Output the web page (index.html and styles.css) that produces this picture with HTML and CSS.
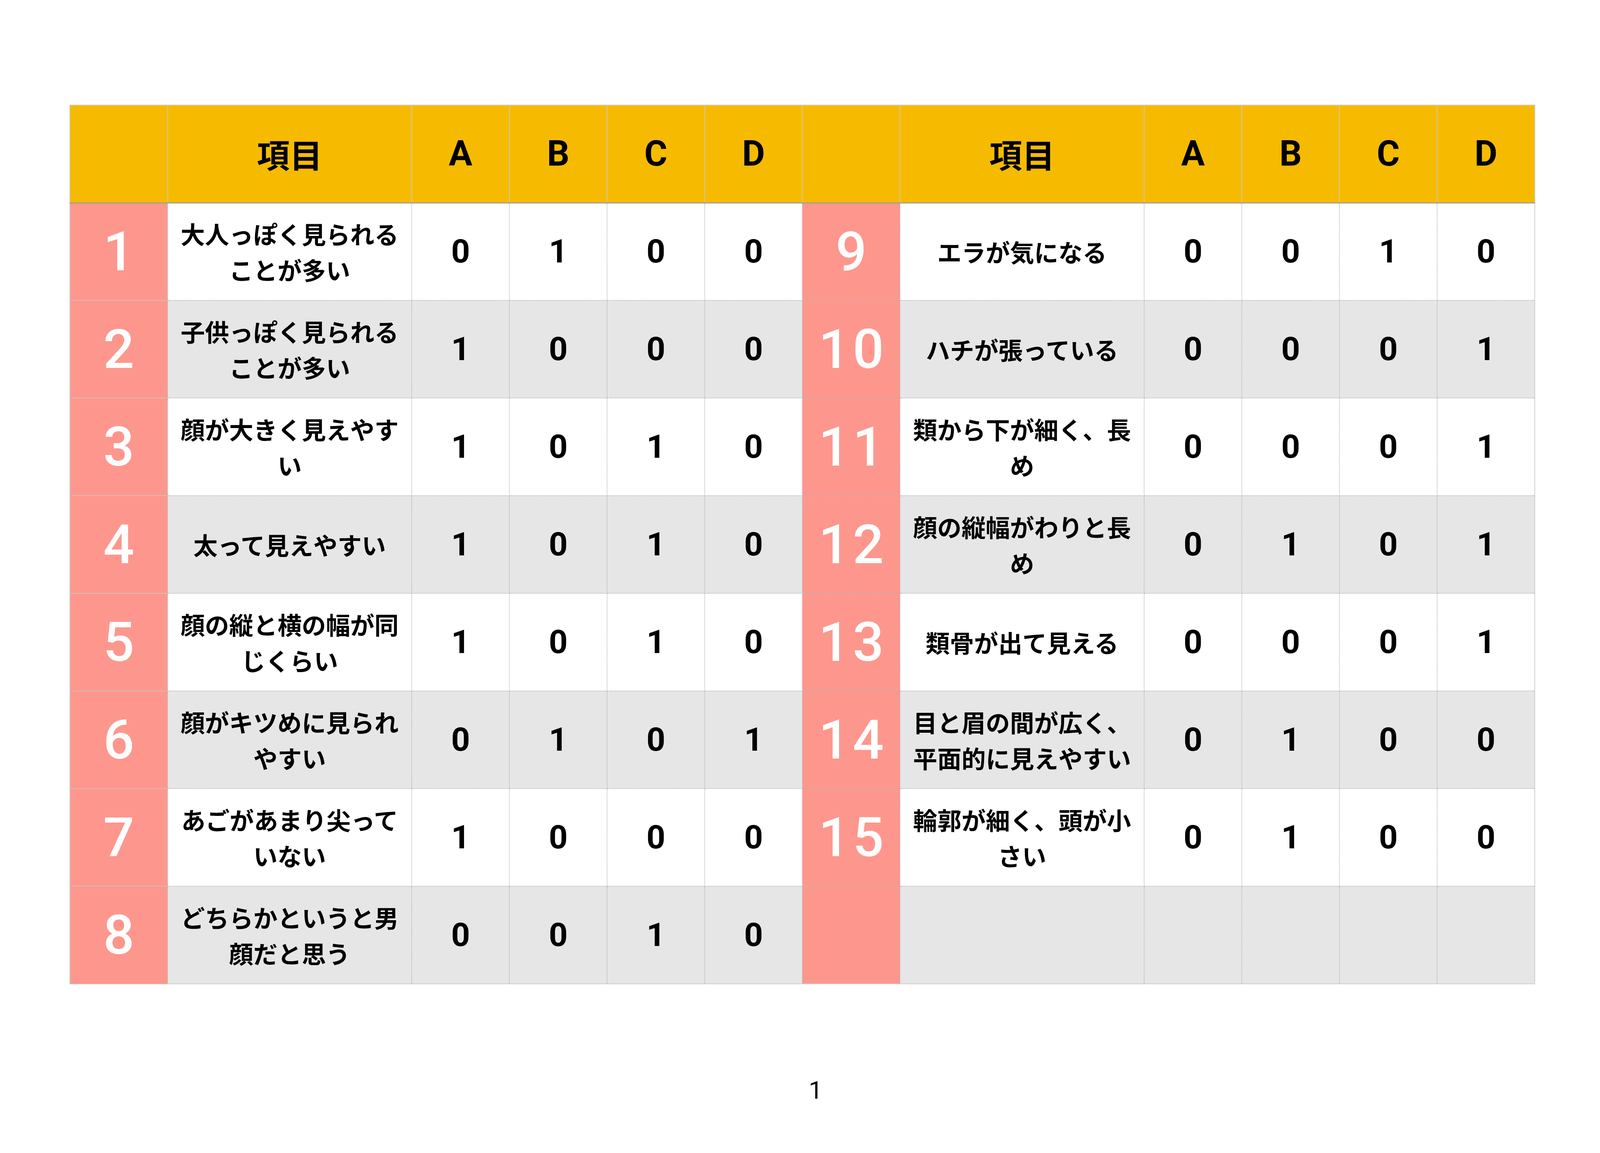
FILE: index.html
```html
<!DOCTYPE html>
<html lang="ja">
<head>
<meta charset="utf-8">
<title>診断表</title>
<link rel="stylesheet" href="styles.css">
</head>
<body>
<div class="page">
  <table class="sheet">
    <colgroup>
      <col class="c-num"><col class="c-item"><col class="c-val"><col class="c-val"><col class="c-val"><col class="c-val">
      <col class="c-num"><col class="c-item"><col class="c-val"><col class="c-val"><col class="c-val"><col class="c-val">
    </colgroup>
    <thead>
      <tr>
        <th></th><th class="jp">項目</th><th>A</th><th>B</th><th>C</th><th>D</th>
        <th></th><th class="jp">項目</th><th>A</th><th>B</th><th>C</th><th>D</th>
      </tr>
    </thead>
    <tbody>
      <tr class="odd">
        <td class="num left">1</td><td class="item">大人っぽく見られることが多い</td><td>0</td><td>1</td><td>0</td><td>0</td>
        <td class="num">9</td><td class="item">エラが気になる</td><td>0</td><td>0</td><td>1</td><td>0</td>
      </tr>
      <tr class="even">
        <td class="num left">2</td><td class="item">子供っぽく見られることが多い</td><td>1</td><td>0</td><td>0</td><td>0</td>
        <td class="num">10</td><td class="item">ハチが張っている</td><td>0</td><td>0</td><td>0</td><td>1</td>
      </tr>
      <tr class="odd">
        <td class="num left">3</td><td class="item">顔が大きく見えやすい</td><td>1</td><td>0</td><td>1</td><td>0</td>
        <td class="num">11</td><td class="item">類から下が細く、長め</td><td>0</td><td>0</td><td>0</td><td>1</td>
      </tr>
      <tr class="even">
        <td class="num left">4</td><td class="item">太って見えやすい</td><td>1</td><td>0</td><td>1</td><td>0</td>
        <td class="num">12</td><td class="item">顔の縦幅がわりと長め</td><td>0</td><td>1</td><td>0</td><td>1</td>
      </tr>
      <tr class="odd">
        <td class="num left">5</td><td class="item">顔の縦と横の幅が同じくらい</td><td>1</td><td>0</td><td>1</td><td>0</td>
        <td class="num">13</td><td class="item">類骨が出て見える</td><td>0</td><td>0</td><td>0</td><td>1</td>
      </tr>
      <tr class="even">
        <td class="num left">6</td><td class="item">顔がキツめに見られやすい</td><td>0</td><td>1</td><td>0</td><td>1</td>
        <td class="num">14</td><td class="item">目と眉の間が広く、平面的に見えやすい</td><td>0</td><td>1</td><td>0</td><td>0</td>
      </tr>
      <tr class="odd">
        <td class="num left">7</td><td class="item">あごがあまり尖っていない</td><td>1</td><td>0</td><td>0</td><td>0</td>
        <td class="num">15</td><td class="item">輪郭が細く、頭が小さい</td><td>0</td><td>1</td><td>0</td><td>0</td>
      </tr>
      <tr class="even last">
        <td class="num left">8</td><td class="item">どちらかというと男顔だと思う</td><td>0</td><td>0</td><td>1</td><td>0</td>
        <td class="num"></td><td class="item"></td><td></td><td></td><td></td><td></td>
      </tr>
    </tbody>
  </table>
  <div class="folio">1</div>
</div>
</body>
</html>
```

FILE: styles.css
```css
html, body {
  margin: 0;
  padding: 0;
  background: #ffffff;
}

body {
  font-family: Roboto, "Liberation Sans", "Noto Sans CJK JP", sans-serif;
  color: #000000;
}

.page {
  width: 4177px;
  height: 2952px;
  padding: 268px 0 0 178px;
  box-sizing: border-box;
}

.sheet {
  border-collapse: collapse;
  table-layout: fixed;
  width: 3750px;
}

.c-num { width: 250px; }
.c-item { width: 625px; }
.c-val { width: 250px; }

.sheet tr { height: 250px; }

.sheet th {
  background: #f6bb00;
  font-size: 90px;
  font-weight: 700;
  line-height: 1;
  text-align: center;
  vertical-align: middle;
  padding: 0;
  border-left: 2px solid #cfc7a8;
  border-right: 2px solid #cfc7a8;
  border-top: 2px solid #d2cdb8;
  border-bottom: 3px solid #a8a286;
}

.sheet th.jp {
  font-family: "Noto Sans CJK JP", sans-serif;
  font-size: 84px;
  font-weight: 700;
}

.sheet td {
  padding: 0;
  text-align: center;
  vertical-align: middle;
  font-size: 84px;
  font-weight: 700;
  line-height: 1;
  border: 2px dotted #b4b4b4;
}

.sheet tr.odd td { background: #ffffff; }
.sheet tr.even td { background: #e6e6e6; }

.sheet td.num {
  background: #fd978d;
  color: #ffffff;
  font-size: 140px;
  font-weight: 500;
  letter-spacing: 8px;
  text-indent: 8px;
}

.sheet tr.odd td.num,
.sheet tr.even td.num { background: #fd978d; }

.sheet td.num.left {
  border-left: 2px solid #d6c4c2;
  border-bottom: 2px solid #d6bcb8;
}

.sheet td.item {
  font-family: "Noto Sans CJK JP", sans-serif;
  font-size: 62px;
  font-weight: 700;
  line-height: 92px;
  padding: 0 17px;
}

.sheet td:last-child { border-right: 2px solid #d0d0d0; }
.sheet tr.last td { border-bottom: 2px solid #d0d0d0; }

.folio {
  width: 3820px;
  margin-top: 240px;
  text-align: center;
  font-size: 63px;
  line-height: 63px;
  font-weight: 400;
}
```
